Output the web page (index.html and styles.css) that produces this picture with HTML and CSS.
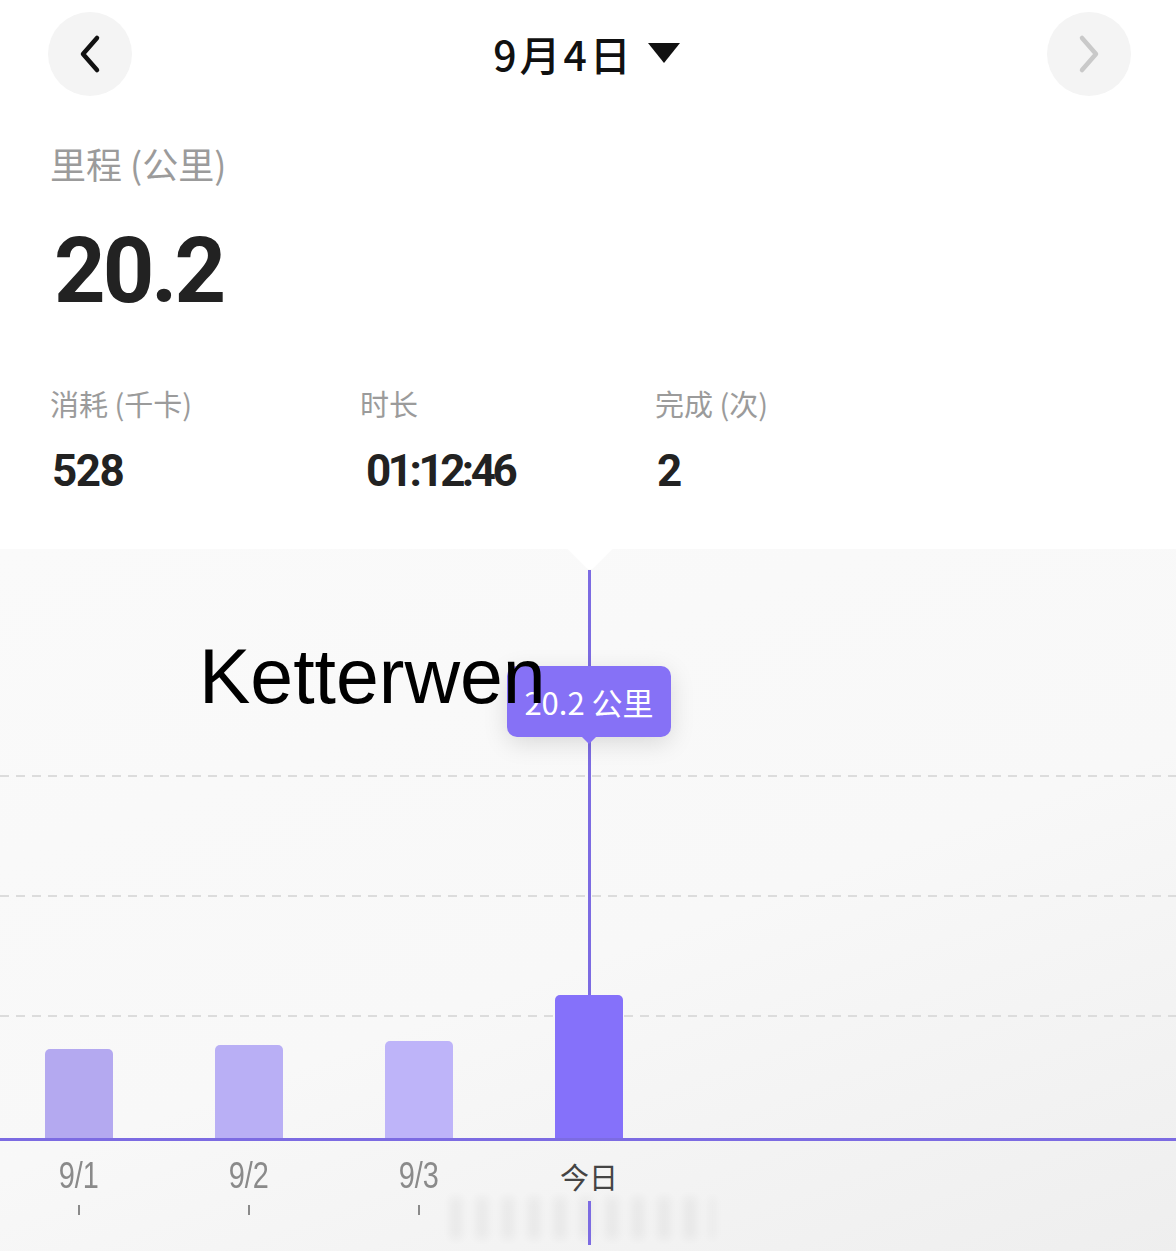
FILE: index.html
```html
<!DOCTYPE html>
<html lang="zh-CN">
<head>
  <meta charset="UTF-8">
  <title>里程</title>
  <link rel="stylesheet" href="styles.css">
</head>
<body>

  <div class="topbar">
    <button class="nav-btn">
      <svg width="30" height="40" viewBox="0 0 30 40"><path d="M22 4 L8 20 L22 36" fill="none" stroke="#111" stroke-width="4.5" stroke-linecap="round" stroke-linejoin="round"/></svg>
    </button>
    <div class="date-pick">9月4日 <span class="caret"></span></div>
    <button class="nav-btn">
      <svg width="30" height="40" viewBox="0 0 30 40"><path d="M8 4 L22 20 L8 36" fill="none" stroke="#c9c9c9" stroke-width="4.5" stroke-linecap="round" stroke-linejoin="round"/></svg>
    </button>
  </div>

  <div class="summary">
    <div class="main-label">里程 (公里)</div>
    <div class="main-value">20.2</div>

    <div class="stats">
      <div class="stat">
        <div class="stat-label">消耗 (千卡)</div>
        <div class="stat-value">528</div>
      </div>
      <div class="stat">
        <div class="stat-label">时长</div>
        <div class="stat-value shift">01:12:46</div>
      </div>
      <div class="stat">
        <div class="stat-label">完成 (次)</div>
        <div class="stat-value">2</div>
      </div>
    </div>
  </div>

  <div class="chart">
    <div class="notch"></div>
    <div class="cursor-line"></div>
    <div class="cursor-tail"></div>

    <div class="plot">
      <div class="grid-line g1"></div>
      <div class="grid-line g2"></div>
      <div class="grid-line g3"></div>

      <div class="bar bar-1" style="height: 89px"></div>
      <div class="bar bar-2" style="height: 93px"></div>
      <div class="bar bar-3" style="height: 97px"></div>
      <div class="bar bar-today" style="height: 143px"></div>
    </div>

    <div class="axis">
      <div class="tick-col"><span class="tick-label">9/1</span><span class="tick"></span></div>
      <div class="tick-col"><span class="tick-label">9/2</span><span class="tick"></span></div>
      <div class="tick-col"><span class="tick-label">9/3</span><span class="tick"></span></div>
      <div class="tick-col"><span class="tick-label today">今日</span></div>
    </div>

    <div class="tooltip">20.2 公里</div>
    <div class="watermark">Ketterwen</div>
    <div class="smudge"></div>
  </div>

</body>
</html>
```

FILE: styles.css
```css
body {
  margin: 0;
  background: #fff;
  font-family: "Noto Sans CJK SC", "Noto Sans", sans-serif;
  color: #222;
  overflow: hidden;
}

.topbar {
  display: flex;
  justify-content: space-between;
  align-items: center;
  padding: 12px 45px 0 48px;
}
.nav-btn {
  width: 84px;
  height: 84px;
  border: none;
  border-radius: 50%;
  background: #f4f4f4;
  display: flex;
  align-items: center;
  justify-content: center;
  padding: 0;
}
.date-pick {
  font-size: 41px;
  font-weight: 500;
  color: #111;
  display: flex;
  align-items: center;
  gap: 14px;
  margin-left: -6px;
  margin-top: -2px;
  letter-spacing: 3px;
}
.caret {
  width: 0;
  height: 0;
  border-left: 16px solid transparent;
  border-right: 16px solid transparent;
  border-top: 20px solid #111;
}

.summary {
  padding: 0 0 0 50px;
}
.main-label {
  margin-top: 46px;
  font-size: 36px;
  line-height: 42px;
  color: #9b9b9b;
}
.main-value {
  margin-top: 38px;
  font-family: Roboto, "Noto Sans", sans-serif;
  font-weight: 700;
  font-size: 90px;
  line-height: 100px;
  letter-spacing: -3px;
  color: #222;
  padding-left: 4px;
}
.stats {
  display: grid;
  grid-template-columns: 310px 295px auto;
  margin-top: 64px;
}
.stat-label {
  font-size: 29px;
  line-height: 34px;
  color: #9b9b9b;
}
.stat-value {
  margin-top: 26px;
  font-family: Roboto, "Noto Sans", sans-serif;
  font-weight: 700;
  font-size: 44px;
  line-height: 50px;
  letter-spacing: -1.5px;
  color: #222;
  padding-left: 2px;
}
.stat-value.shift {
  padding-left: 6px;
  letter-spacing: -3.5px;
}

.chart {
  position: relative;
  margin-top: 53px;
  height: 710px;
  background: linear-gradient(160deg, #fafafa 0%, #f8f8f8 55%, #eeeeee 100%);
}
.notch {
  position: absolute;
  left: 574px;
  top: -16px;
  width: 32px;
  height: 32px;
  background: #fff;
  transform: rotate(45deg);
  border-bottom-right-radius: 6px;
}

.plot {
  position: relative;
  height: 589px;
  display: flex;
  align-items: flex-end;
  gap: 102px;
  padding-left: 45px;
  border-bottom: 3px solid #7c6be2;
}
.grid-line {
  position: absolute;
  left: 0;
  right: 0;
  height: 2px;
  background: repeating-linear-gradient(90deg, #dcdcdc 0 9px, transparent 9px 16px);
}
.g1 { top: 226px; }
.g2 { top: 346px; }
.g3 { top: 466px; }

.bar {
  position: relative;
  width: 68px;
  border-radius: 5px 5px 0 0;
}
.bar-1 { background: #b4a9f0; }
.bar-2 { background: #b9aff5; }
.bar-3 { background: #beb4f9; }
.bar-today { background: #8571fa; }

.axis {
  display: flex;
  gap: 102px;
  padding-left: 45px;
  padding-top: 16px;
}
.tick-col {
  width: 68px;
  display: flex;
  flex-direction: column;
  align-items: center;
}
.tick-label {
  display: inline-block;
  font-family: "Liberation Sans", Arial, sans-serif;
  font-size: 37px;
  line-height: 38px;
  color: #8a8a8a;
  transform: scaleX(0.78);
}
.tick-label.today {
  font-family: "Noto Sans CJK SC", sans-serif;
  font-size: 29px;
  color: #444;
  transform: none;
}
.tick {
  margin-top: 10px;
  width: 2px;
  height: 10px;
  background: #8a8a8a;
}

.cursor-line {
  position: absolute;
  left: 588px;
  top: 21px;
  height: 570px;
  width: 3px;
  background: #7c6be2;
}
.cursor-tail {
  position: absolute;
  left: 588px;
  top: 652px;
  height: 44px;
  width: 3px;
  background: #7c6be2;
  z-index: 2;
}
.tooltip {
  position: absolute;
  left: 507px;
  top: 117px;
  width: 164px;
  height: 71px;
  border-radius: 10px;
  background: #8671f6;
  color: #fff;
  font-size: 31px;
  line-height: 71px;
  text-align: center;
  box-shadow: 0 6px 24px rgba(0, 0, 0, 0.13);
}
.tooltip::after {
  content: "";
  position: absolute;
  left: 74px;
  bottom: -7px;
  border-left: 8px solid transparent;
  border-right: 8px solid transparent;
  border-top: 8px solid #8671f6;
}
.watermark {
  position: absolute;
  left: 199px;
  top: 89px;
  font-family: "Liberation Sans", Arial, sans-serif;
  font-size: 77px;
  line-height: 1;
  color: #000;
}
.smudge {
  position: absolute;
  left: 450px;
  top: 648px;
  width: 265px;
  height: 42px;
  background: repeating-linear-gradient(90deg, rgba(0,0,0,0.10) 0 12px, rgba(0,0,0,0) 12px 26px);
  filter: blur(5px);
  opacity: 0.45;
}
```
